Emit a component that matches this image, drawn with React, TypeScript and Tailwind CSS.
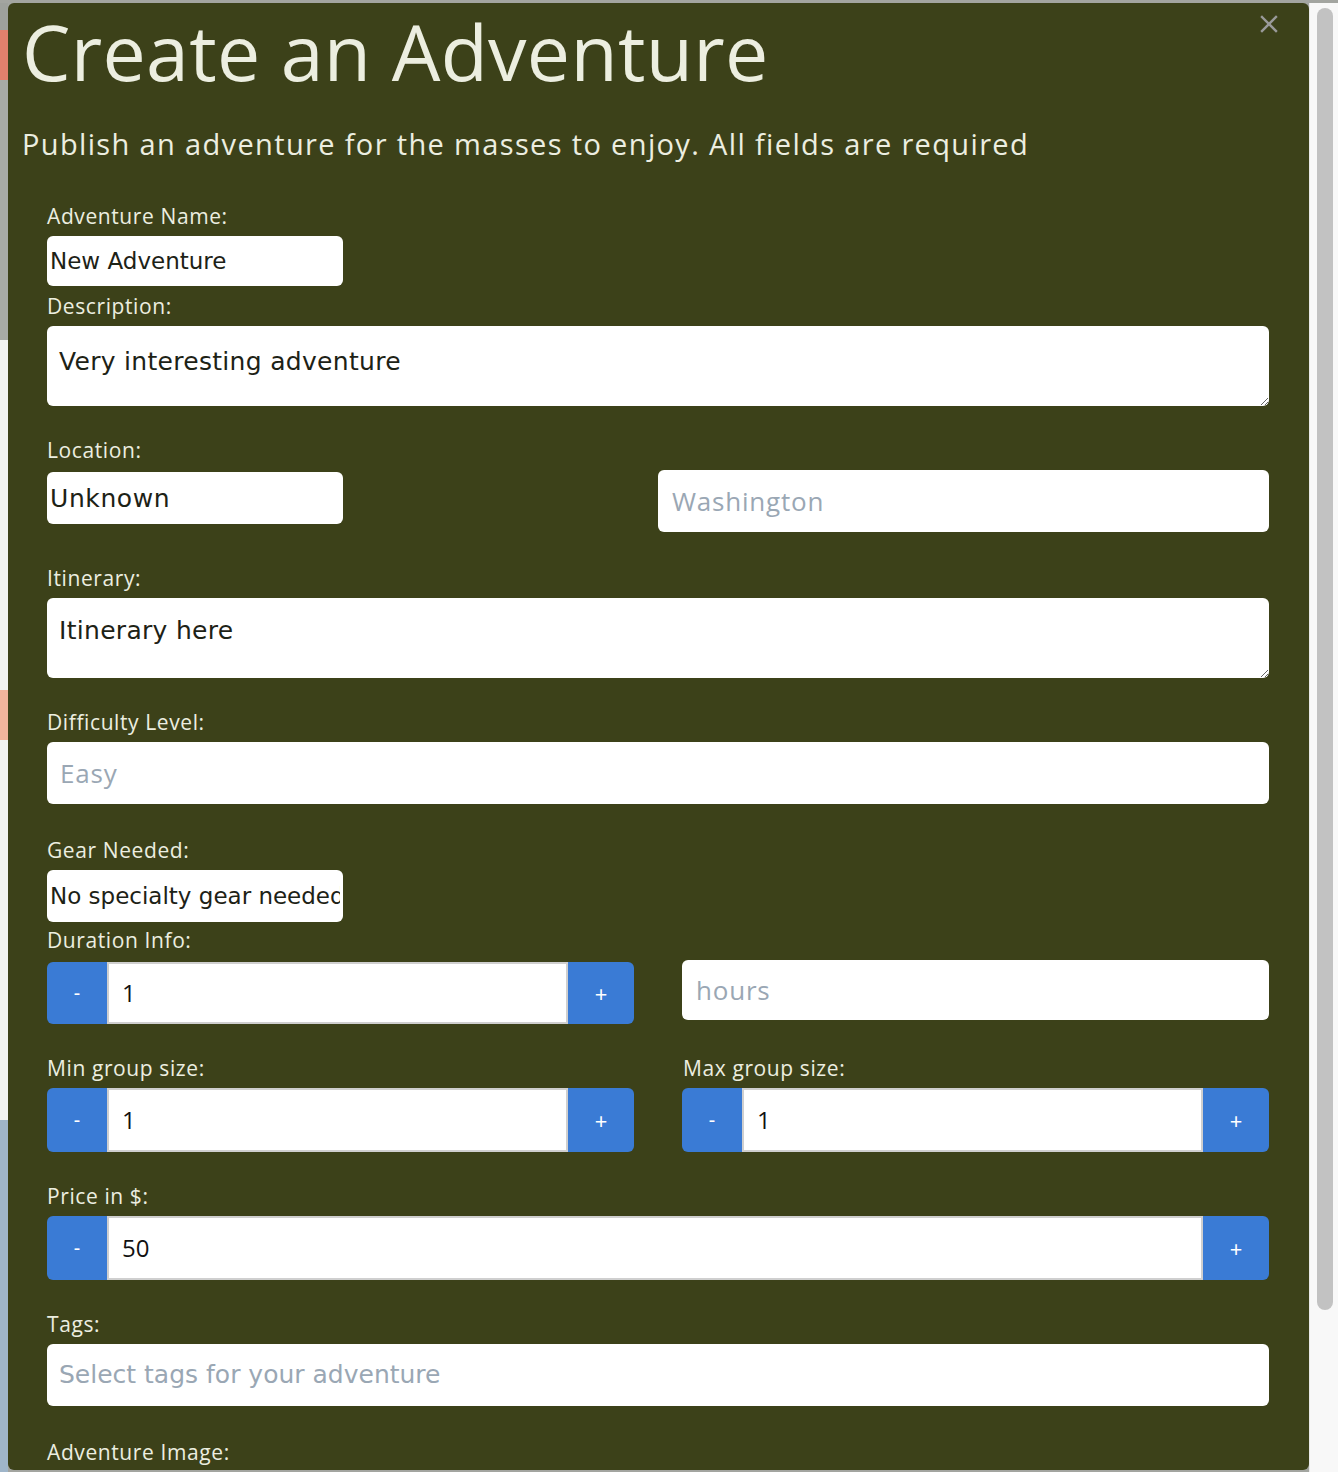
const title = "font-['Open_Sans',sans-serif]";
const body = "font-['DejaVu_Sans',sans-serif]";

function Label({ text, className = "" }: { text: string; className?: string }) {
  return (
    <label
      className={`block h-[24px] mb-[8px] text-[21px] leading-[24px] tracking-[0.6px] text-[#eceee0] ${title} ${className}`}
    >
      {text}
    </label>
  );
}

function Stepper({ value, height }: { value: string; height: string }) {
  return (
    <div className={`flex w-full ${height}`}>
      <button className="w-[60px] shrink-0 rounded-l-[6px] bg-[#3a7bd5] text-white text-[20px]">-</button>
      <input
        readOnly
        value={value}
        className={`min-w-0 flex-1 border-2 border-[#cfcfcf] bg-white pl-[13px] text-[24px] text-[#111] outline-none ${title}`}
      />
      <button className="w-[66px] shrink-0 rounded-r-[6px] bg-[#3a7bd5] text-white text-[22px]">+</button>
    </div>
  );
}

export default function App() {
  const field = `rounded-[6px] bg-white text-[#1d2216] outline-none ${body}`;
  const placeholder = `text-[26px] tracking-[0.8px] placeholder:text-[#9aa7b4] ${title}`;

  return (
    <div className="flex h-[1472px] w-[1338px] overflow-hidden bg-[#a3a5a0] pt-[3px]">
      {/* blurred page behind the modal */}
      <div className="flex w-[8px] shrink-0 flex-col">
        <div className="h-[27px] bg-[#9ea19c]" />
        <div className="h-[50px] bg-[#e2806c]" />
        <div className="h-[260px] bg-[#a8aba6]" />
        <div className="h-[350px] bg-[#f1f3f0]" />
        <div className="h-[50px] bg-[#f0b49c]" />
        <div className="h-[380px] bg-[#f1f3f0]" />
        <div className="flex-1 bg-[#9fb5c9]" />
      </div>

      <div className="relative h-[1467px] w-[1301px] shrink-0 rounded-[6px] bg-[#3c4119]">
        <button className="absolute right-[31px] top-[12px] text-[#9a9a9a]">
          <svg width="18" height="18" viewBox="0 0 18 18" stroke="currentColor" strokeWidth="2.4" strokeLinecap="square">
            <line x1="2" y1="2" x2="16" y2="16" />
            <line x1="16" y1="2" x2="2" y2="16" />
          </svg>
        </button>

        <div className="pl-[14px]">
          <h1 className={`mt-[5px] text-[77px] leading-[88px] tracking-[0.3px] text-[#eceee0] ${title}`}>
            Create an Adventure
          </h1>
          <p className={`mt-[30px] text-[29px] leading-[36px] tracking-[1.35px] text-[#eceee0] ${title}`}>
            Publish an adventure for the masses to enjoy. All fields are required
          </p>
        </div>

        <form className="pl-[39px] pr-[40px]">
          <div className="mt-[42px]">
            <Label text="Adventure Name:" />
            <input readOnly value="New Adventure" className={`h-[50px] w-[296px] px-[3px] text-[23px] ${field}`} />
          </div>

          <div className="mt-[8px]">
            <Label text="Description:" />
            <textarea
              readOnly
              value="Very interesting adventure"
              className={`block h-[80px] w-full resize-y px-[12px] pt-[21px] text-[25px] leading-[30px] tracking-[0.3px] ${field}`}
            />
          </div>

          <div className="mt-[32px]">
            <Label text="Location:" />
            <div className="grid grid-cols-2 items-start">
              <input
                readOnly
                value="Unknown"
                className={`mt-[2px] h-[52px] w-[296px] px-[3px] text-[25px] tracking-[0.6px] ${field}`}
              />
              <input placeholder="Washington" className={`h-[62px] w-full px-[14px] ${field} ${placeholder}`} />
            </div>
          </div>

          <div className="mt-[34px]">
            <Label text="Itinerary:" />
            <textarea
              readOnly
              value="Itinerary here"
              className={`block h-[80px] w-full resize-y px-[12px] pt-[18px] text-[25px] leading-[30px] tracking-[0.3px] ${field}`}
            />
          </div>

          <div className="mt-[32px]">
            <Label text="Difficulty Level:" />
            <input placeholder="Easy" className={`h-[62px] w-full px-[13px] ${field} ${placeholder}`} />
          </div>

          <div className="mt-[34px]">
            <Label text="Gear Needed:" />
            <input
              readOnly
              value="No specialty gear needed"
              className={`h-[52px] w-[296px] px-[3px] text-[23px] ${field}`}
            />
          </div>

          <div className="mt-[6px]">
            <Label text="Duration Info:" />
            <div className="grid grid-cols-2 items-start gap-x-[48px]">
              <div className="mt-[2px]">
                <Stepper value="1" height="h-[62px]" />
              </div>
              <input placeholder="hours" className={`h-[60px] w-full px-[14px] ${field} ${placeholder}`} />
            </div>
          </div>

          <div className="mt-[32px] grid grid-cols-2 gap-x-[48px]">
            <div>
              <Label text="Min group size:" />
              <Stepper value="1" height="h-[64px]" />
            </div>
            <div>
              <Label text="Max group size:" className="pl-[1px]" />
              <Stepper value="1" height="h-[64px]" />
            </div>
          </div>

          <div className="mt-[32px]">
            <Label text="Price in $:" />
            <Stepper value="50" height="h-[64px]" />
          </div>

          <div className="mt-[32px]">
            <Label text="Tags:" />
            <div className={`flex h-[62px] w-full items-center px-[12px] text-[25px] text-[#9aa7b4] ${field}`}>
              Select tags for your adventure
            </div>
          </div>

          <div className="mt-[34px]">
            <Label text="Adventure Image:" />
          </div>
        </form>
      </div>

      {/* page scrollbar */}
      <div className="flex-1 border-l border-[#e8e8e8] bg-[#f8f8f8] px-[7px] pt-[5px]">
        <div className="h-[1302px] w-[16px] rounded-full bg-[#c2c2c2]" />
      </div>
    </div>
  );
}
